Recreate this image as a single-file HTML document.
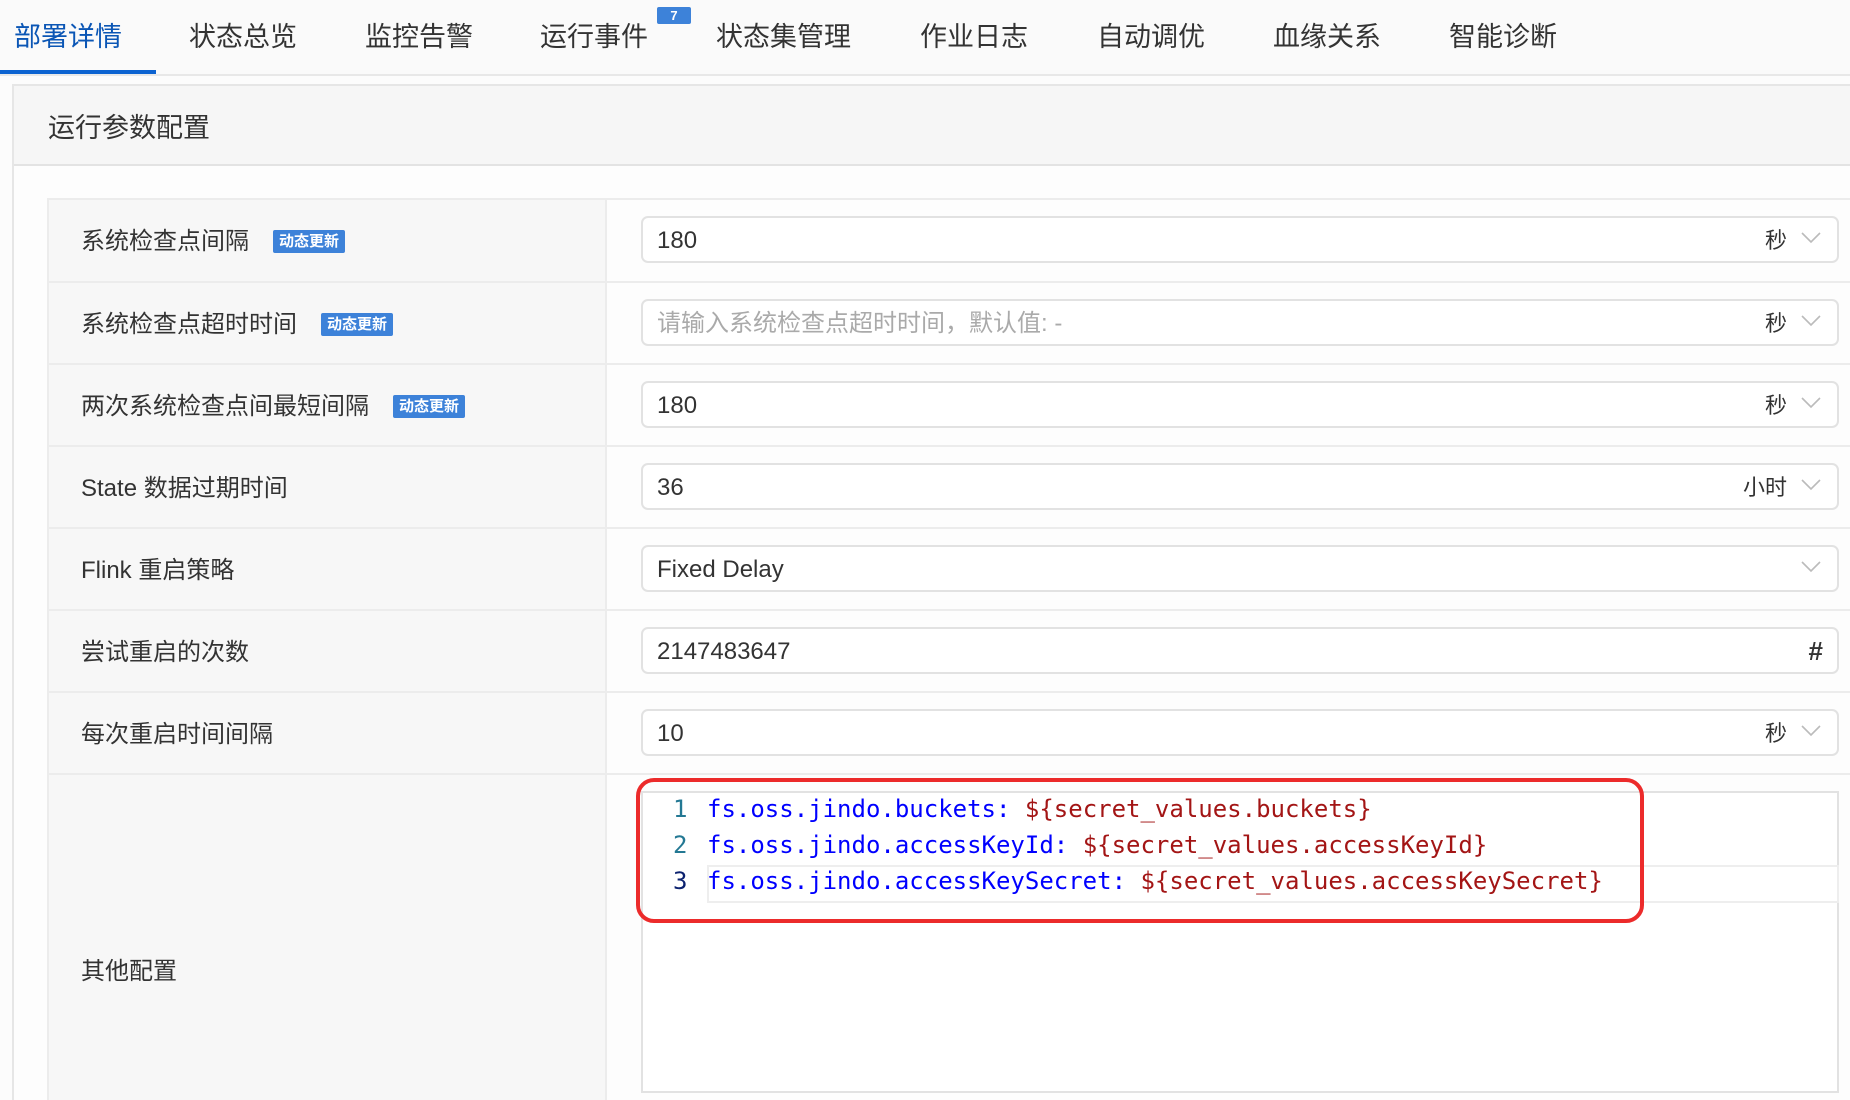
<!DOCTYPE html>
<html><head><meta charset="utf-8"><style>
*{box-sizing:border-box;margin:0;padding:0}
html{width:1850px;height:1100px;overflow:hidden}
body{width:1850px;height:1100px;overflow:hidden;background:#fcfcfc;font-family:"Liberation Sans","Noto Sans CJK SC",sans-serif;color:#333;position:relative}
.tabs{position:absolute;left:0;top:0;width:1850px;height:76px;border-bottom:2px solid #e8e8e8;background:#fafafa}
.tab{position:absolute;top:19px;font-size:27px;color:#333;line-height:36px}
.tab.act{color:#0b56b5}
.ul{position:absolute;left:0;top:70px;width:156px;height:4px;background:#0c63d1}
.badge{position:absolute;left:657px;top:7px;width:34px;height:17px;background:#3d82d9;color:#fff;font-size:13px;text-align:center;line-height:17px;border-radius:2px;font-weight:bold}
.panel{position:absolute;left:12px;top:84px;width:1838px;height:1016px;border-left:2px solid #e6e6e6;border-top:2px solid #e6e6e6;background:#fdfdfd;overflow:hidden}
.ph{position:absolute;left:0;top:0;width:100%;height:80px;background:#f6f6f6;border-bottom:2px solid #e3e3e3}
.ph span{position:absolute;left:34px;top:20px;font-size:27px;color:#333}
.row{position:absolute;left:47px;width:1803px;border-top:2px solid #ececec;background:#fdfdfd}
.lab{position:absolute;left:0;top:0;width:560px;height:100%;background:#f7f7f7;border-right:2px solid #ececec;border-left:2px solid #ececec}
.lab span.t{position:absolute;left:32px;font-size:24px;color:#333}
.bd{display:inline-block;margin-left:24px;background:#3d82d9;color:#fff;font-size:15px;font-weight:bold;padding:0 6px;height:23px;line-height:23px;border-radius:2px;vertical-align:3px}
.inp{position:absolute;left:594px;top:16px;width:1198px;height:47px;border:2px solid #e2e2e2;border-radius:7px;background:#fff;font-size:24px;line-height:45px;padding-left:14px;color:#333}
.inp .ph2{color:#aaa}
.u{position:absolute;right:50px;top:0;font-size:22px;color:#333}
.cv{position:absolute;right:16px;top:14px;width:20px;height:12px}
.code{position:absolute;left:641px;top:791px;width:1198px;height:302px;border:2px solid #e2e2e2;background:#fff;font-family:"DejaVu Sans Mono","Liberation Mono",monospace}
.ln{position:absolute;left:30px;font-size:24px;color:#237893}
.cl{position:absolute;left:64px;font-size:24px;white-space:pre;color:#0000ff}
.cl i{font-style:normal;color:#a31515}
.hl{position:absolute;left:64px;top:72px;width:1132px;height:38px;border:2px solid #eee}
.red{position:absolute;left:636px;top:778px;width:1008px;height:145px;border:4px solid #ec2b2b;border-radius:18px}
</style></head><body>
<div class="tabs">
<span class="tab act" style="left:14px">部署详情</span>
<span class="tab" style="left:189px">状态总览</span>
<span class="tab" style="left:365px">监控告警</span>
<span class="tab" style="left:540px">运行事件</span>
<span class="tab" style="left:716px">状态集管理</span>
<span class="tab" style="left:920px">作业日志</span>
<span class="tab" style="left:1097px">自动调优</span>
<span class="tab" style="left:1273px">血缘关系</span>
<span class="tab" style="left:1449px">智能诊断</span>
<div class="ul"></div>
</div>
<div class="badge">7</div>
<div class="panel"><div class="ph"><span>运行参数配置</span></div></div>

<div class="row" style="top:198px;height:83px"><div class="lab"><span class="t" style="top:21px">系统检查点间隔<span class="bd">动态更新</span></span></div>
<div class="inp">180<span class="u">秒</span><svg class="cv" viewBox="0 0 20 12"><path d="M1 1l9 9 9-9" fill="none" stroke="#bbb" stroke-width="1.6"/></svg></div></div>
<div class="row" style="top:281px;height:82px"><div class="lab"><span class="t" style="top:21px">系统检查点超时时间<span class="bd">动态更新</span></span></div>
<div class="inp"><span class="ph2">请输入系统检查点超时时间，默认值: -</span><span class="u">秒</span><svg class="cv" viewBox="0 0 20 12"><path d="M1 1l9 9 9-9" fill="none" stroke="#bbb" stroke-width="1.6"/></svg></div></div>
<div class="row" style="top:363px;height:82px"><div class="lab"><span class="t" style="top:21px">两次系统检查点间最短间隔<span class="bd">动态更新</span></span></div>
<div class="inp">180<span class="u">秒</span><svg class="cv" viewBox="0 0 20 12"><path d="M1 1l9 9 9-9" fill="none" stroke="#bbb" stroke-width="1.6"/></svg></div></div>
<div class="row" style="top:445px;height:82px"><div class="lab"><span class="t" style="top:21px">State 数据过期时间</span></div>
<div class="inp">36<span class="u">小时</span><svg class="cv" viewBox="0 0 20 12"><path d="M1 1l9 9 9-9" fill="none" stroke="#bbb" stroke-width="1.6"/></svg></div></div>
<div class="row" style="top:527px;height:82px"><div class="lab"><span class="t" style="top:21px">Flink 重启策略</span></div>
<div class="inp">Fixed Delay<svg class="cv" viewBox="0 0 20 12"><path d="M1 1l9 9 9-9" fill="none" stroke="#bbb" stroke-width="1.6"/></svg></div></div>
<div class="row" style="top:609px;height:82px"><div class="lab"><span class="t" style="top:21px">尝试重启的次数</span></div>
<div class="inp">2147483647<span class="u" style="right:14px;font-size:26px;font-weight:bold">#</span></div></div>
<div class="row" style="top:691px;height:82px"><div class="lab"><span class="t" style="top:21px">每次重启时间间隔</span></div>
<div class="inp">10<span class="u">秒</span><svg class="cv" viewBox="0 0 20 12"><path d="M1 1l9 9 9-9" fill="none" stroke="#bbb" stroke-width="1.6"/></svg></div></div>
<div class="row" style="top:773px;height:327px"><div class="lab"><span class="t" style="top:176px">其他配置</span></div></div>

<div class="code">
<div class="hl"></div>
<span class="ln" style="top:2px">1</span><span class="cl" style="top:2px">fs.oss.jindo.buckets: <i>${secret_values.buckets}</i></span>
<span class="ln" style="top:38px">2</span><span class="cl" style="top:38px">fs.oss.jindo.accessKeyId: <i>${secret_values.accessKeyId}</i></span>
<span class="ln" style="top:74px;color:#0b216f">3</span><span class="cl" style="top:74px">fs.oss.jindo.accessKeySecret: <i>${secret_values.accessKeySecret}</i></span>
</div>
<div class="red"></div>
</body></html>
